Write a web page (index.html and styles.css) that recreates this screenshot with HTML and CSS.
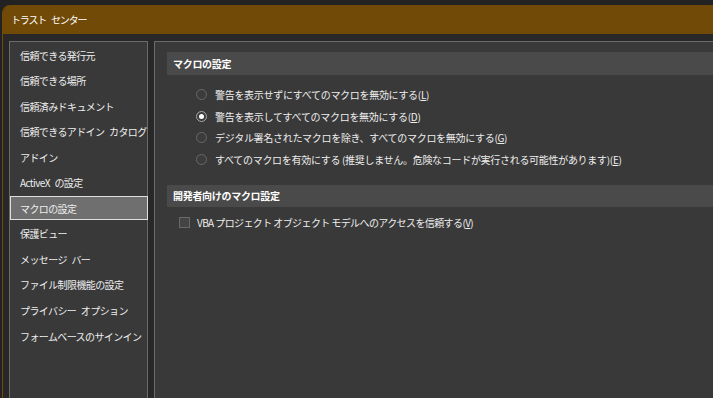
FILE: index.html
```html
<!DOCTYPE html>
<html lang="ja">
<head>
    <meta charset="UTF-8">
    <meta name="viewport" content="width=device-width, initial-scale=1.0">
    <title>トラスト センター</title>
    <link rel="stylesheet" href="styles.css">
</head>
<body>
    <div class="behind"></div>

    <div class="dialog">
        <div class="titlebar">トラスト センター</div>

        <div class="dialog-body">
            <ul class="sidebar">
                <li class="nav-item">信頼できる発行元</li>
                <li class="nav-item">信頼できる場所</li>
                <li class="nav-item">信頼済みドキュメント</li>
                <li class="nav-item">信頼できるアドイン カタログ</li>
                <li class="nav-item">アドイン</li>
                <li class="nav-item">ActiveX の設定</li>
                <li class="nav-item selected">マクロの設定</li>
                <li class="nav-item">保護ビュー</li>
                <li class="nav-item">メッセージ バー</li>
                <li class="nav-item">ファイル制限機能の設定</li>
                <li class="nav-item">プライバシー オプション</li>
                <li class="nav-item">フォームベースのサインイン</li>
            </ul>

            <div class="panel">
                <div class="section-title">マクロの設定</div>
                <div class="options">
                    <label class="option"><span class="radio"></span><span>警告を表示せずにすべてのマクロを無効にする(<u>L</u>)</span></label>
                    <label class="option"><span class="radio checked"></span><span>警告を表示してすべてのマクロを無効にする(<u>D</u>)</span></label>
                    <label class="option"><span class="radio"></span><span>デジタル署名されたマクロを除き、すべてのマクロを無効にする(<u>G</u>)</span></label>
                    <label class="option"><span class="radio"></span><span>すべてのマクロを有効にする (推奨しません。危険なコードが実行される可能性があります)(<u>E</u>)</span></label>
                </div>

                <div class="section-title second">開発者向けのマクロ設定</div>
                <label class="check-row"><span class="checkbox"></span><span>VBA プロジェクト オブジェクト モデルへのアクセスを信頼する(<u>V</u>)</span></label>
            </div>
        </div>
    </div>
</body>
</html>
```

FILE: styles.css
```css
body {
    margin: 0;
    width: 713px;
    height: 398px;
    overflow: hidden;
    background: #222222;
    font-family: "Noto Sans CJK JP", "Noto Sans", sans-serif;
    font-size: 10px;
    color: #eeeeee;
}

.behind {
    height: 5px;
}

.dialog {
    margin-left: 2px;
    width: 740px;
    height: 420px;
    background: #282828;
    border-left: 1px solid #714a07;
    border-top-left-radius: 8px;
    overflow: hidden;
}

.titlebar {
    height: 29px;
    line-height: 29px;
    padding-left: 8px;
    background: #714a07;
    color: #ffffff;
    font-size: 10px;
    letter-spacing: -1.2px;
    word-spacing: 4px;
}

.dialog-body {
    display: flex;
    gap: 6px;
    padding: 7px 0 0 6px;
    height: 400px;
}

.sidebar {
    list-style: none;
    margin: 0;
    padding: 0.5px 0 0 0;
    width: 137px;
    background: #393939;
    border: 1px solid #6b6b6b;
}

.nav-item {
    height: 24px;
    line-height: 24px;
    margin-bottom: 1.55px;
    padding-left: 9px;
    border: 1px solid transparent;
    box-sizing: border-box;
    white-space: nowrap;
    letter-spacing: -0.6px;
    word-spacing: 3px;
    color: #eeeeee;
}

.nav-item.selected {
    background: #6f6f6f;
    border-color: #dedede;
    width: 138px;
}

.panel {
    flex: 1;
    background: #393939;
    border: 1px solid #6b6b6b;
    padding: 10px 0 0 12px;
}

.section-title {
    height: 23px;
    line-height: 23px;
    padding-left: 6px;
    background: #4a4a4a;
    font-weight: bold;
    color: #ffffff;
    letter-spacing: -0.3px;
}

.section-title.second {
    height: 22px;
    line-height: 22px;
    margin-top: 15px;
}

.options {
    margin-top: 9px;
    padding-left: 29px;
}

.option {
    display: flex;
    align-items: center;
    gap: 8px;
    height: 21.5px;
    white-space: nowrap;
    letter-spacing: -0.3px;
}

.radio {
    width: 11px;
    height: 11px;
    box-sizing: border-box;
    border-radius: 50%;
    border: 1px solid #686868;
    background: #3c3c3c;
    flex: none;
    display: flex;
    align-items: center;
    justify-content: center;
}

.radio.checked {
    border-color: #a8a8a8;
}

.radio.checked::after {
    content: "";
    width: 5px;
    height: 5px;
    border-radius: 50%;
    background: #ffffff;
}

.check-row {
    display: flex;
    align-items: center;
    gap: 7px;
    height: 21px;
    margin-top: 5px;
    padding-left: 12px;
    white-space: nowrap;
    letter-spacing: -0.6px;
}

.checkbox {
    width: 11px;
    height: 11px;
    box-sizing: border-box;
    border: 1px solid #686868;
    background: #444444;
    flex: none;
}

u {
    text-decoration-thickness: 1px;
    text-underline-offset: 1px;
}
```
